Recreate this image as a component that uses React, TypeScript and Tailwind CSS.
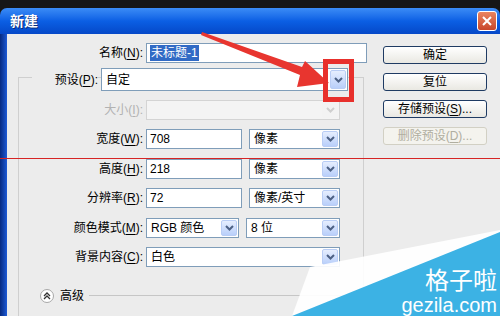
import type { ReactNode } from "react";

const FONT = { fontFamily: "'Liberation Sans', 'Noto Sans CJK SC', sans-serif" };

function Chevron({ disabled }: { disabled?: boolean }) {
  return (
    <div
      className={
        disabled
          ? "flex h-full w-[16px] items-center justify-center rounded-[2px] bg-[#f3f3f3]"
          : "flex h-full w-[16px] items-center justify-center rounded-[2px] border border-[#b9cdf5] bg-linear-to-b from-[#e6eefe] to-[#b9cffa]"
      }
    >
      <svg width="9" height="6" viewBox="0 0 9 6">
        <path
          d="M1 1 L4.5 4.5 L8 1"
          stroke={disabled ? "#cfcfcf" : "#4d6185"}
          strokeWidth="2"
          fill="none"
        />
      </svg>
    </div>
  );
}

function Select({ text, w, disabled, h = "h-[20px]" }: { text?: string; w: string; disabled?: boolean; h?: string }) {
  return (
    <div
      className={`flex ${h} ${w} items-center border p-[1px] ${
        disabled ? "border-[#d4d4d4] bg-[#f4f4f4]" : "border-[#7f9db9] bg-white"
      }`}
    >
      <span className="pl-[3px] text-[12px] leading-none text-black">{text}</span>
      <div className="ml-auto h-full">
        <Chevron disabled={disabled} />
      </div>
    </div>
  );
}

function Input({ children, w }: { children: ReactNode; w: string }) {
  return (
    <div className={`flex h-[20px] ${w} items-center border border-[#7f9db9] bg-white pl-[3px] text-[12px] leading-none`}>
      {children}
    </div>
  );
}

function Label({ children, w, disabled }: { children: ReactNode; w: string; disabled?: boolean }) {
  return (
    <div className={`${w} text-right text-[12px] leading-none ${disabled ? "text-[#b2b2b2]" : "text-black"}`}>
      {children}
    </div>
  );
}

function U({ c }: { c: string }) {
  return <span className="underline underline-offset-2">{c}</span>;
}

function Btn({ children, disabled }: { children: ReactNode; disabled?: boolean }) {
  return (
    <div
      className={
        disabled
          ? "flex h-[18px] w-[104px] items-center justify-center rounded-[3px] border border-[#d2d0c4] bg-[#f4f3ee] text-[12px] leading-none text-[#b0aea0]"
          : "flex h-[18px] w-[104px] items-center justify-center rounded-[3px] border border-[#1f3b63] bg-linear-to-b from-white to-[#e9e8e2] text-[12px] leading-none text-black"
      }
    >
      {children}
    </div>
  );
}

export default function App() {
  return (
    <div className="relative flex h-[316px] w-[500px] flex-col overflow-hidden bg-[#161616]" style={FONT}>
      <div className="h-[8px] shrink-0" />
      <div className="flex h-[26px] shrink-0 items-center rounded-t-[7px] bg-linear-to-b from-[#3b8cf6] via-[#0b5fe4] to-[#0648c8] pl-[10px] pr-[3px]">
        <span className="text-[14px] font-bold text-white" style={{ textShadow: "1px 1px 0 #0a2d7a" }}>
          新建
        </span>
        <div className="ml-auto flex h-[20px] w-[20px] items-center justify-center rounded-[3px] border border-white bg-linear-to-b from-[#e98460] to-[#c8462a]">
          <svg width="12" height="12" viewBox="0 0 12 12">
            <path d="M2 2 L10 10 M10 2 L2 10" stroke="white" strokeWidth="2" />
          </svg>
        </div>
      </div>

      <div className="flex min-h-0 flex-1 overflow-hidden">
        <div className="w-[7px] shrink-0 bg-linear-to-r from-[#072a80] to-[#1d5ad6]" />
        <div className="flex flex-1 bg-[#ececec]">
          <div className="w-[370px] shrink-0 pt-[9px]">
            <div className="flex items-center">
              <Label w="w-[136px]">
                名称(<U c="N" />):
              </Label>
              <div className="ml-[3px]">
                <Input w="w-[221px]">
                  <span className="bg-[#316ac5] px-[1px] py-[2px] text-white">未标题-1</span>
                </Input>
              </div>
            </div>

            <div className="ml-[11px] mt-[14px] h-[260px] w-[346px] border-l border-r border-t border-[#cfcfcf]">
              <div className="-mt-[10px] flex items-center">
                <div className="w-[13px]" />
                <div className="w-[66px] bg-[#ececec] py-[2px] text-right text-[12px] leading-none">
                  预设(<U c="P" />):
                </div>
                <div className="ml-[3px]">
                  <Select text="自定" w="w-[247px]" h="h-[23px]" />
                </div>
              </div>

              <div className="mt-[9px] flex flex-col gap-[9.4px]">
                <div className="flex items-center">
                  <Label w="w-[124px]" disabled>
                    大小(<U c="I" />):
                  </Label>
                  <div className="ml-[3px]">
                    <Select w="w-[194px]" disabled />
                  </div>
                </div>
                <div className="flex items-center">
                  <Label w="w-[124px]">
                    宽度(<U c="W" />):
                  </Label>
                  <div className="ml-[3px]">
                    <Input w="w-[96px]">708</Input>
                  </div>
                  <div className="ml-[7px]">
                    <Select text="像素" w="w-[91px]" />
                  </div>
                </div>
                <div className="flex items-center">
                  <Label w="w-[124px]">
                    高度(<U c="H" />):
                  </Label>
                  <div className="ml-[3px]">
                    <Input w="w-[96px]">218</Input>
                  </div>
                  <div className="ml-[7px]">
                    <Select text="像素" w="w-[91px]" />
                  </div>
                </div>
                <div className="flex items-center">
                  <Label w="w-[124px]">
                    分辨率(<U c="R" />):
                  </Label>
                  <div className="ml-[3px]">
                    <Input w="w-[96px]">72</Input>
                  </div>
                  <div className="ml-[7px]">
                    <Select text="像素/英寸" w="w-[91px]" />
                  </div>
                </div>
                <div className="flex items-center">
                  <Label w="w-[124px]">
                    颜色模式(<U c="M" />):
                  </Label>
                  <div className="ml-[3px]">
                    <Select text="RGB 颜色" w="w-[93px]" />
                  </div>
                  <div className="ml-[7px]">
                    <Select text="8 位" w="w-[94px]" />
                  </div>
                </div>
                <div className="flex items-center">
                  <Label w="w-[124px]">
                    背景内容(<U c="C" />):
                  </Label>
                  <div className="ml-[3px]">
                    <Select text="白色" w="w-[194px]" />
                  </div>
                </div>
              </div>

              <div className="mt-[22px] flex items-center">
                <div className="ml-[21px] flex h-[14px] w-[14px] items-center justify-center rounded-full border border-[#a8a8a8] bg-white">
                  <svg width="8" height="8" viewBox="0 0 8 8">
                    <path d="M1 4 L4 1 L7 4 M1 7 L4 4 L7 7" stroke="#333" strokeWidth="1.3" fill="none" />
                  </svg>
                </div>
                <span className="ml-[6px] text-[12px] leading-none">高级</span>
                <div className="ml-[5px] h-px flex-1 bg-[#c6c6c6]" />
              </div>
            </div>
          </div>

          <div className="ml-[6px] flex flex-col gap-[9px] pt-[12px]">
            <Btn>确定</Btn>
            <Btn>复位</Btn>
            <Btn>
              存储预设(<U c="S" />)...
            </Btn>
            <Btn disabled>
              删除预设(<U c="D" />)...
            </Btn>
          </div>
        </div>
      </div>

      {/* annotations drawn over the screenshot */}
      <div className="absolute left-0 top-[158px] h-px w-[500px] bg-[#d62424]" />
      <svg className="absolute left-0 top-0" width="500" height="316" viewBox="0 0 500 316">
        <path d="M202 32 L302 67 L305 61 L329 83 L297 87 L300 75 L201 35 Z" fill="#e8352f" />
        <polygon points="310,267 500,230 500,316 292,316" fill="#ffffff" fillOpacity="0.92" />
        <polygon points="292,316 500,232 500,316" fill="#3cb2e4" />
      </svg>
      <div className="absolute left-[323px] top-[59px] h-[43px] w-[31px] border-[5px] border-[#e8302c]" />
      <div className="absolute right-[3px] top-[264px] flex flex-col items-end text-white">
        <span className="text-[24px] leading-[30px]" style={{ fontFamily: "'Noto Sans CJK SC', sans-serif" }}>
          格子啦
        </span>
        <span className="mt-[1px] text-[20px] leading-[20px]" style={{ fontFamily: "'Liberation Sans', sans-serif" }}>
          gezila.com
        </span>
      </div>
    </div>
  );
}
